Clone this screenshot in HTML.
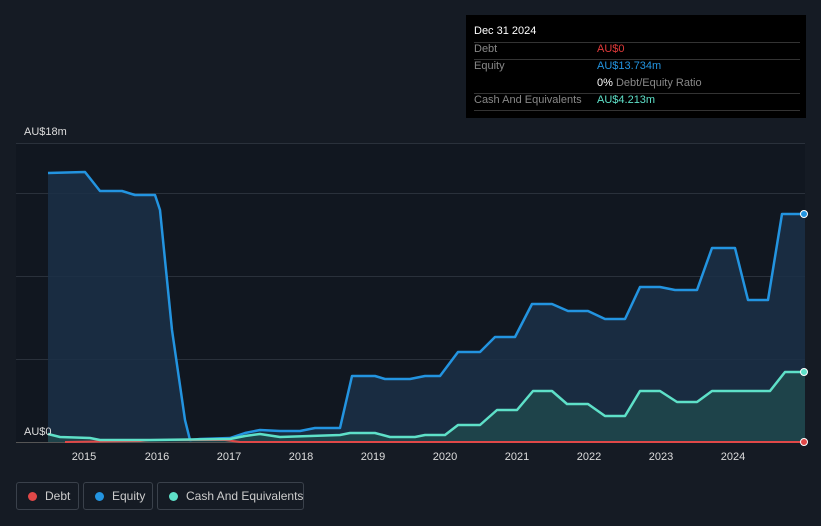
<!DOCTYPE html><html><head><style>
html,body{margin:0;background:#151b24;font-family:"Liberation Sans",sans-serif;width:821px;height:526px;overflow:hidden;position:relative}
.tip{position:absolute;left:466px;top:15px;width:340px;height:103px;background:#000;color:#fff;font-size:11px}
.tip .r{position:absolute;left:8px;width:326px;border-top:1px solid #333}
.l{position:absolute;left:8px;color:#888}.v{position:absolute;left:131px}
.leg{position:absolute;top:482px;height:28px;border:1px solid #3a414b;border-radius:3px;color:#ccc;font-size:12px;line-height:26px;box-sizing:border-box;white-space:nowrap;overflow:hidden}
.leg i{display:inline-block;width:9px;height:9px;border-radius:50%;margin:0 8px 0 11px;vertical-align:-1px}
</style></head><body>
<svg width="821" height="526" style="position:absolute;left:0;top:0">
<rect x="16" y="143" width="789" height="299" fill="#111720"/>
<g stroke="#2a313b" stroke-width="1"><line x1="16" y1="143.5" x2="805" y2="143.5"/><line x1="16" y1="193.5" x2="805" y2="193.5"/><line x1="16" y1="276.5" x2="805" y2="276.5"/><line x1="16" y1="359.5" x2="805" y2="359.5"/><line x1="16" y1="442.5" x2="805" y2="442.5" stroke="#555"/></g>
<path d="M48,173 L85,172 L100,191 L122,191 L135,195 L155,195 L160,210 L172,330 L185,420 L190,440 L200,439 L230,438 L245,433 L260,430 L280,431 L300,431 L315,428 L340,428 L352,376 L375,376 L385,379 L410,379 L425,376 L440,376 L458,352 L480,352 L495,337 L515,337 L532,304 L552,304 L568,311 L588,311 L605,319 L625,319 L640,287 L660,287 L675,290 L697,290 L712,248 L735,248 L748,300 L768,300 L782,214 L805,214 L805,442 L48,442Z" fill="#1b3048" fill-opacity="0.85"/>
<path d="M48,434 L60,437 L90,438 L100,440 L150,440 L230,439 L245,436 L260,434 L280,437 L310,436 L340,435 L350,433 L375,433 L390,437 L415,437 L425,435 L445,435 L458,425 L480,425 L497,410 L517,410 L533,391 L552,391 L567,404 L588,404 L605,416 L625,416 L640,391 L660,391 L677,402 L697,402 L712,391 L770,391 L785,372 L805,372 L805,442 L48,442Z" fill="#1f4a4c" fill-opacity="0.8"/>
<path d="M48,173 L85,172 L100,191 L122,191 L135,195 L155,195 L160,210 L172,330 L185,420 L190,440 L200,439 L230,438 L245,433 L260,430 L280,431 L300,431 L315,428 L340,428 L352,376 L375,376 L385,379 L410,379 L425,376 L440,376 L458,352 L480,352 L495,337 L515,337 L532,304 L552,304 L568,311 L588,311 L605,319 L625,319 L640,287 L660,287 L675,290 L697,290 L712,248 L735,248 L748,300 L768,300 L782,214 L805,214" fill="none" stroke="#2394e0" stroke-width="2.5" stroke-linejoin="round"/>
<path d="M65,442 L140,441 L150,440 L225,440 L240,442 L805,442" fill="none" stroke="#e04848" stroke-width="2"/>
<path d="M48,434 L60,437 L90,438 L100,440 L150,440 L230,439 L245,436 L260,434 L280,437 L310,436 L340,435 L350,433 L375,433 L390,437 L415,437 L425,435 L445,435 L458,425 L480,425 L497,410 L517,410 L533,391 L552,391 L567,404 L588,404 L605,416 L625,416 L640,391 L660,391 L677,402 L697,402 L712,391 L770,391 L785,372 L805,372" fill="none" stroke="#5ee0c8" stroke-width="2.5" stroke-linejoin="round"/>
<circle cx="804" cy="214" r="3.5" fill="#2394e0" stroke="#fff" stroke-width="1"/>
<circle cx="804" cy="372" r="3.5" fill="#5ee0c8" stroke="#fff" stroke-width="1"/>
<circle cx="804" cy="442" r="3.5" fill="#e04848" stroke="#fff" stroke-width="1"/>
<g fill="#ddd" font-size="11" text-anchor="middle" font-family="Liberation Sans">
<text x="84" y="460">2015</text><text x="157" y="460">2016</text><text x="229" y="460">2017</text><text x="301" y="460">2018</text><text x="373" y="460">2019</text><text x="445" y="460">2020</text><text x="517" y="460">2021</text><text x="589" y="460">2022</text><text x="661" y="460">2023</text><text x="733" y="460">2024</text>
<text x="24" y="135" text-anchor="start">AU$18m</text><text x="24" y="435" text-anchor="start">AU$0</text></g>
</svg>
<div class="tip">
<div style="position:absolute;left:8px;top:10px">Dec 31 2024</div>
<div class="r" style="top:27px"></div><div class="l" style="top:28px">Debt</div><div class="v" style="top:28px;color:#e03a3a">AU$0</div>
<div class="r" style="top:44px"></div><div class="l" style="top:45px">Equity</div><div class="v" style="top:45px;color:#2394e0">AU$13.734m</div>
<div class="v" style="top:62px;color:#888"><b style="color:#fff;font-weight:normal">0%</b> Debt/Equity Ratio</div>
<div class="r" style="top:78px"></div><div class="l" style="top:79px">Cash And Equivalents</div><div class="v" style="top:79px;color:#5ee0c8">AU$4.213m</div>
<div class="r" style="top:95px"></div>
</div>
<div class="leg" style="left:16px;width:63px"><i style="background:#e04848"></i>Debt</div>
<div class="leg" style="left:83px;width:70px"><i style="background:#2394e0"></i>Equity</div>
<div class="leg" style="left:157px;width:147px"><i style="background:#5ee0c8"></i>Cash And Equivalents</div>
</body></html>
